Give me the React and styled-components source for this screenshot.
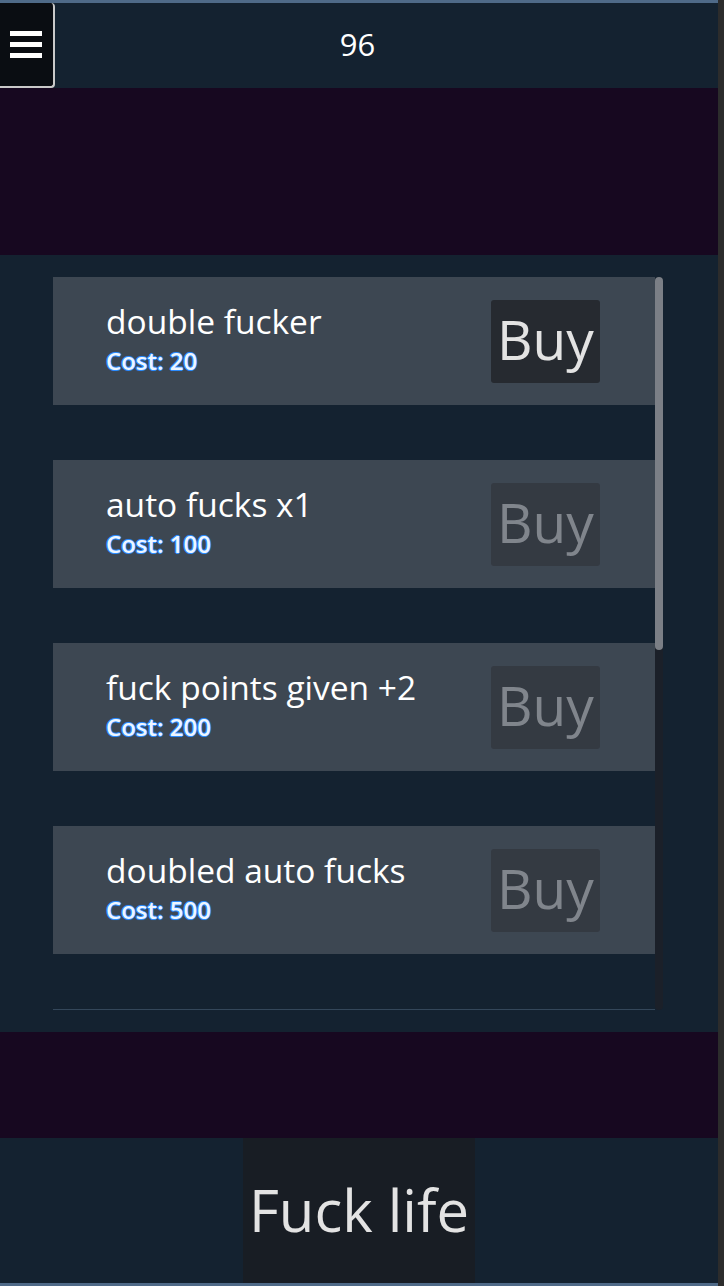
import React from 'react';
import styled, { createGlobalStyle } from 'styled-components';

const Global = createGlobalStyle`
    html, body {
        margin: 0;
        padding: 0;
        background: #2c2c2c;
    }
    body {
        font-family: "Open Sans", "Noto Sans", sans-serif;
    }
`;

const Page = styled.div`
    width: 718px;
    height: 1286px;
    box-sizing: border-box;
    border-top: 3px solid #4f6a88;
    border-bottom: 3px solid #4f6a88;
    background-color: #142230;
    display: flex;
    flex-direction: column;
`;

const Header = styled.header`
    height: 85px;
    display: flex;
    align-items: center;
    color: #ffffff;
`;

const MenuButton = styled.button`
    width: 55px;
    height: 85px;
    box-sizing: border-box;
    background-color: #0a0d12;
    border: none;
    border-right: 2px solid #c9c9c9;
    border-bottom: 2px solid #c9c9c9;
    border-radius: 0 4px 4px 0;
    padding: 0 0 0 10px;
    display: flex;
    flex-direction: column;
    justify-content: center;
    gap: 6.5px;
    cursor: pointer;
`;

const Bar = styled.span`
    display: block;
    width: 32px;
    height: 4.5px;
    background-color: #ffffff;
`;

const Counter = styled.div`
    flex: 1;
    text-align: center;
    font-size: 31px;
    line-height: 1;
    padding: 0 58px 2px 0;
`;

const Band = styled.div`
    height: ${(p) => p.h}px;
    background-color: #170820;
`;

const Main = styled.main`
    height: 777px;
    box-sizing: border-box;
    padding: 22px 55px 22px 53px;
`;

const ListFrame = styled.div`
    display: flex;
    height: 733px;
`;

const ListColumn = styled.div`
    flex: 1;
    display: flex;
    flex-direction: column;
    min-width: 0;
`;

const Scroller = styled.div`
    height: 732px;
    overflow-y: auto;
    scrollbar-width: none;
    &::-webkit-scrollbar {
        display: none;
    }
`;

const Rule = styled.div`
    height: 1px;
    background-color: #34475a;
`;

const Track = styled.div`
    width: 8px;
    background-color: #1b2029;
    border-radius: 4px;
`;

const Thumb = styled.div`
    height: 373px;
    background-color: #7b7f86;
    border-radius: 4px;
`;

const Item = styled.div`
    height: 128px;
    margin-bottom: 55px;
    background-color: #3d4752;
    display: flex;
    align-items: center;
    justify-content: space-between;
    padding: 0 55px 0 53px;
`;

const Info = styled.div`
    display: flex;
    flex-direction: column;
    padding-bottom: 8px;
`;

const Title = styled.div`
    color: #ffffff;
    font-size: 33.5px;
    line-height: 40px;
    margin-bottom: 7px;
`;

const Cost = styled.div`
    color: #eef6ff;
    font-size: 24px;
    font-weight: 600;
    line-height: 26px;
    text-shadow: -1px 0 #2b8cff, 1px 0 #2b8cff, 0 -1px #2b8cff, 0 1px #2b8cff, 0 0 2px #2b8cff;
`;

const BuyButton = styled.button`
    height: 83px;
    width: 109px;
    padding: 0 0 6px;
    border: none;
    border-radius: 3px;
    font-family: "Open Sans", "Noto Sans", sans-serif;
    font-size: 55px;
    line-height: 1;
    background-color: ${(p) => (p.disabled ? '#343a42' : '#262a30')};
    color: ${(p) => (p.disabled ? '#80858c' : '#e3e3e3')};
    cursor: ${(p) => (p.disabled ? 'default' : 'pointer')};
`;

const Footer = styled.footer`
    height: 145px;
    display: flex;
    justify-content: center;
`;

const LifeButton = styled.button`
    height: 145px;
    padding: 0 6px 2px;
    border: none;
    background-color: #181d24;
    color: #e3e3e3;
    font-family: "Open Sans", "Noto Sans", sans-serif;
    font-size: 58px;
    cursor: pointer;
`;

const upgrades = [
    { name: 'double fucker', cost: 20 },
    { name: 'auto fucks x1', cost: 100 },
    { name: 'fuck points given +2', cost: 200 },
    { name: 'doubled auto fucks', cost: 500 },
    { name: 'auto fucks x5', cost: 1000 },
    { name: 'fuck points given +10', cost: 2500 },
    { name: 'tripled auto fucks', cost: 5000 },
    { name: 'ultimate fucker', cost: 10000 },
];

export default function App() {
    const points = 96;

    return (
        <Page>
            <Global />
            <Header>
                <MenuButton aria-label="menu">
                    <Bar />
                    <Bar />
                    <Bar />
                </MenuButton>
                <Counter>{points}</Counter>
            </Header>
            <Band h={167} />
            <Main>
                <ListFrame>
                    <ListColumn>
                        <Scroller>
                            {upgrades.map((u) => (
                                <Item key={u.name}>
                                    <Info>
                                        <Title>{u.name}</Title>
                                        <Cost>Cost: {u.cost}</Cost>
                                    </Info>
                                    <BuyButton disabled={u.cost > points}>Buy</BuyButton>
                                </Item>
                            ))}
                        </Scroller>
                        <Rule />
                    </ListColumn>
                    <Track>
                        <Thumb />
                    </Track>
                </ListFrame>
            </Main>
            <Band h={106} />
            <Footer>
                <LifeButton>Fuck life</LifeButton>
            </Footer>
        </Page>
    );
}
